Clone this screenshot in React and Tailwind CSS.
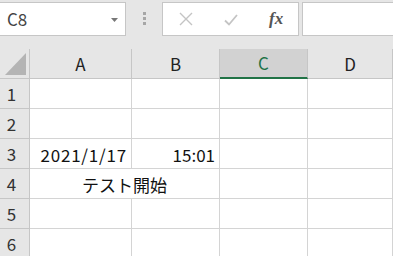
import React from "react";

const font = { fontFamily: '"Noto Sans CJK JP", "Liberation Sans", sans-serif' };

function Cell({ className = "", children }) {
    return (
        <div className={"h-[30px] border-r border-b border-[#d4d4d4] bg-white flex items-center " + className}>
            {children}
        </div>
    );
}

function RowHead({ n }) {
    return (
        <div className="h-[30px] border-r border-b border-[#c6c6c6] bg-[#e6e6e6] flex items-center justify-center pr-[6px] text-[17px] text-[#333]">
            {n}
        </div>
    );
}

function ColHead({ label, active }) {
    if (active) {
        return (
            <div className="h-[30px] border-r border-[#c6c6c6] border-b-2 border-b-[#217346] bg-[#d2d2d2] flex items-center justify-center text-[17px] text-[#217346]">
                {label}
            </div>
        );
    }
    return (
        <div className="h-[30px] border-r border-b border-[#c6c6c6] bg-[#e6e6e6] flex items-center justify-center text-[17px] text-[#222]">
            {label}
        </div>
    );
}

export default function App() {
    return (
        <div className="w-[393px] h-[256px] overflow-hidden bg-[#e6e6e6] select-none" style={font}>
            {/* formula bar */}
            <div className="h-[49px] flex items-start pt-[2px]">
                <div className="-ml-px w-[127px] h-[34px] bg-white border border-[#c6c6c6] flex items-center pl-[7px] pr-[7px]">
                    <span className="text-[17px] text-[#444] flex-1">C8</span>
                    <svg width="7" height="4" viewBox="0 0 7 4" className="mt-[1px]">
                        <path d="M0 0H7L3.5 4Z" fill="#777" />
                    </svg>
                </div>
                <div className="ml-[17px] mt-[10px] flex flex-col gap-[2px]">
                    <div className="w-[3px] h-[3px] bg-[#a6a6a6]" />
                    <div className="w-[3px] h-[3px] bg-[#a6a6a6]" />
                    <div className="w-[3px] h-[3px] bg-[#a6a6a6]" />
                </div>
                <div className="ml-[16px] w-[137px] h-[34px] bg-white border border-[#c6c6c6] flex items-center">
                    <svg width="14" height="14" viewBox="0 0 14 14" className="ml-[16px]">
                        <path d="M1 1L13 13M13 1L1 13" stroke="#c4c4c4" strokeWidth="1.4" />
                    </svg>
                    <svg width="14" height="12" viewBox="0 0 14 12" className="ml-[31px] mt-[2px]">
                        <path d="M1 6.5L5 10.5L13 1" stroke="#c4c4c4" strokeWidth="1.8" fill="none" />
                    </svg>
                    <span className="ml-[31px] text-[17px] italic font-bold text-[#555]" style={{ fontFamily: '"Liberation Serif", serif' }}>
                        fx
                    </span>
                </div>
                <div className="ml-[3px] flex-1 -mr-[4px] h-[34px] bg-white border border-[#c6c6c6]" />
            </div>

            {/* grid */}
            <div className="grid grid-cols-[30px_102px_88px_88px_1fr]">
                <div className="h-[30px] border-r border-b border-[#c6c6c6] bg-[#e6e6e6] relative">
                    <svg width="30" height="30" viewBox="0 0 30 30" className="absolute left-0 top-0">
                        <path d="M26 4V26H5Z" fill="#b4b4b4" />
                    </svg>
                </div>
                <ColHead label="A" />
                <ColHead label="B" />
                <ColHead label="C" active />
                <ColHead label="D" />

                <RowHead n="1" />
                <Cell /><Cell /><Cell /><Cell />

                <RowHead n="2" />
                <Cell /><Cell /><Cell /><Cell />

                <RowHead n="3" />
                <Cell className="justify-end pr-[4px] pt-[2px] text-[17px] tracking-[0.8px] text-[#111]">2021/1/17</Cell>
                <Cell className="justify-end pr-[4px] pt-[2px] text-[17px] text-[#111]">15:01</Cell>
                <Cell /><Cell />

                <RowHead n="4" />
                <Cell className="col-span-2 justify-center pt-[2px] text-[17px] text-[#111]">テスト開始</Cell>
                <Cell /><Cell />

                <RowHead n="5" />
                <Cell /><Cell /><Cell /><Cell />

                <RowHead n="6" />
                <Cell /><Cell /><Cell /><Cell />
            </div>
        </div>
    );
}
